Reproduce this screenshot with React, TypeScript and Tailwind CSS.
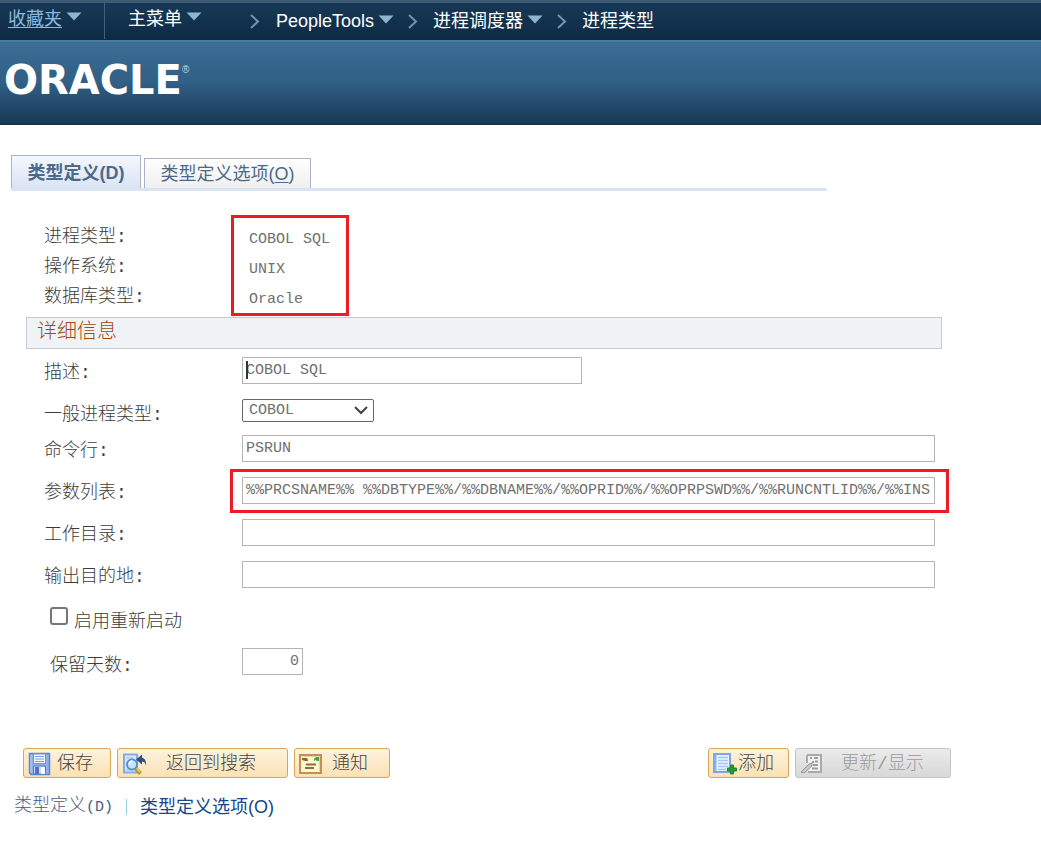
import type { ReactNode } from 'react';

const SANS = "font-['Liberation_Sans','Noto_Sans_CJK_SC',sans-serif]";
const MONO = "font-['Liberation_Mono','Noto_Sans_CJK_SC',monospace]";
const FIELD = `block h-[27px] border border-[#b5b5b5] bg-white px-[3px] text-[15px] text-[#707070] outline-none ${MONO}`;

function Arrow() {
  return (
    <svg width="16" height="9" viewBox="0 0 16 9" aria-hidden="true" className="shrink-0">
      <path d="M0.5 0.5h15L8 8.5z" fill="#8fb4d2" />
    </svg>
  );
}

function Chevron() {
  return (
    <svg width="10" height="15" viewBox="0 0 10 15" aria-hidden="true" className="shrink-0" fill="none">
      <path d="M1 1l7 6.5L1 14" stroke="#7393ae" strokeWidth="2" />
    </svg>
  );
}

function SaveIcon() {
  return (
    <svg width="23" height="24" viewBox="0 0 23 24" aria-hidden="true">
      <path d="M1.5 1.5h20v21H3l-1.500-1.500z" fill="#8db0ee" stroke="#5f86d2" strokeWidth="1.500" />
      <path d="M3 3v17" stroke="#b6cdf7" />
      <rect x="5.500" y="2" width="12" height="9.500" fill="#f3f7ff" stroke="#6f94da" />
      <path d="M7 4.500h9M7 7h9M7 9.500h9" stroke="#79a0e4" />
      <path d="M5.500 22v-8h12v8z" fill="#cfdcf8" stroke="#5577c0" />
      <rect x="7" y="15" width="4" height="7" fill="#5074bf" />
      <rect x="13" y="15" width="4" height="7" fill="#fff" />
    </svg>
  );
}

function ReturnIcon() {
  return (
    <svg width="26" height="24" viewBox="0 0 26 24" aria-hidden="true" fill="none">
      <path d="M2 2.500h13v18H2z" fill="#dce9fd" stroke="#83abe8" strokeWidth="2" />
      <path d="M4 6h8M4 18h8" stroke="#98bcec" />
      <path d="M13.500 16.500l5 5" stroke="#b79c28" strokeWidth="4" />
      <path d="M14.500 16l3.500 4" stroke="#e4d463" strokeWidth="1.500" />
      <circle cx="10" cy="12.500" r="5" fill="#c5e6fa" stroke="#5d8fc7" strokeWidth="2" />
      <path d="M7.500 12c0-2 1-3 3-3" stroke="#fff" strokeWidth="1.500" />
      <path d="M14 7.500l6-5v3c3 1 4.500 4 4 8-1-3-2-4-4-4v3z" fill="#304f87" />
    </svg>
  );
}

function NotifyIcon() {
  return (
    <svg width="23" height="20" viewBox="0 0 23 20" aria-hidden="true">
      <rect x="1" y="1" width="21" height="18" fill="#fff8cf" stroke="#c48e58" strokeWidth="2" />
      <path d="M2.500 2.500h18v15" fill="none" stroke="#ecd3a0" />
      <path d="M3 4h5l1 2v1H6L3 6z" fill="#93642d" />
      <path d="M15 7V5l2-2h3v4h-2l-1-1z" fill="#48a241" />
      <path d="M7 10.500h10M6 14h9" stroke="#9a693b" strokeWidth="2" />
    </svg>
  );
}

function AddIcon() {
  return (
    <svg width="24" height="22" viewBox="0 0 24 22" aria-hidden="true">
      <rect x="1" y="1" width="16" height="18" fill="#eaf3ff" stroke="#7ba4ec" strokeWidth="2" />
      <path d="M2.500 2v16" stroke="#89b2ef" strokeWidth="2" />
      <path d="M5 4.500h10M5 7.500h10M5 10.500h10M5 13.500h10M5 16.500h8" stroke="#a6c6f3" strokeWidth="1.500" />
      <path d="M17.500 12h3v3h3v3h-3v3h-3v-3h-3v-3h3z" fill="#2c9a36" stroke="#1b832b" />
    </svg>
  );
}

function UpdateIcon() {
  return (
    <svg width="23" height="21" viewBox="0 0 23 21" aria-hidden="true" fill="none">
      <path d="M7 2h14v17H8" fill="#f2f2f2" stroke="#aaa" strokeWidth="2" />
      <path d="M10 5h2M14 5h4M12 9h2M15 8.500h3M13 12h5M12 15.500h6" stroke="#9c9c9c" strokeWidth="2" />
      <path d="M1 19l8-8 3-1v3l-8 7z" fill="#c7c7c7" stroke="#979797" />
      <path d="M7 2v8" stroke="#aaa" strokeWidth="2" />
    </svg>
  );
}

function ActionButton({ icon, size, disabled, children }: { icon: ReactNode; size: string; disabled?: boolean; children: ReactNode }) {
  const tone = disabled
    ? 'border-[#c4c4c4] bg-linear-to-b from-[#ebebeb] to-[#d8d8d8] text-[#9b9b9b]'
    : 'border-[#d9a655] bg-linear-to-b from-[#fdf2dd] to-[#fae2b5] text-[#444]';
  return (
    <button type="button" disabled={disabled} className={`flex h-[30px] items-center rounded-[3px] border pl-1 pt-px text-[18px] font-light ${tone} ${size} ${MONO}`}>
      <span className="shrink-0">{icon}</span>
      <span className="whitespace-nowrap leading-6">{children}</span>
    </button>
  );
}

function Row({ id, label, children, height = 'h-[42px]' }: { id: string; label: string; children: ReactNode; height?: string }) {
  return (
    <div className={`flex items-start pl-[18px] ${height}`}>
      <label htmlFor={id} className={`w-[198px] shrink-0 leading-8 ${MONO}`}>{label}</label>
      {children}
    </div>
  );
}

const facts = [
  ['进程类型:', 'COBOL SQL'],
  ['操作系统:', 'UNIX'],
  ['数据库类型:', 'Oracle'],
];

export default function App() {
  return (
    <div className={`min-h-screen bg-white text-[18px] text-[#3c3c3c] ${SANS}`}>
      <nav className="flex h-10 items-start border-t-[3px] border-[#3c5a72] bg-linear-to-b from-[#173957] to-[#0e2a43] text-white">
        <div className="flex h-9 items-start gap-1 border-r border-[#3f5f7b] pl-2 pr-[22px] pt-[2px]">
          <a href="#favorites" className="leading-7 text-[#8fb7dc] underline underline-offset-2">收藏夹</a>
          <span className="pt-[7px]"><Arrow /></span>
        </div>
        <div className="flex items-start gap-1 pl-[23px] pt-[2px]">
          <a href="#menu" className="leading-7">主菜单</a>
          <span className="pt-[7px]"><Arrow /></span>
        </div>
        <div className="flex h-9 items-center pl-12">
          <Chevron />
          <a href="#peopletools" className="pl-4 pr-1">PeopleTools</a>
          <span className="pb-1"><Arrow /></span>
          <span className="pl-[14px]"><Chevron /></span>
          <a href="#scheduler" className="pl-[15px] pr-1">进程调度器</a>
          <span className="pb-1"><Arrow /></span>
          <span className="pl-[14px]"><Chevron /></span>
          <a href="#types" className="pl-[15px]">进程类型</a>
        </div>
      </nav>
      <header className="flex h-[85px] items-start border-b-2 border-t-2 border-b-[#14334f] border-t-[#4a7ba3] bg-linear-to-b from-[#3c6d95] via-[#315f85] to-[#193a57] pl-1 pt-[14px] text-white">
        <span className="font-['DejaVu_Sans',sans-serif] text-[40px] font-bold leading-[48px]">ORACLE</span>
        <span className="pt-2 text-[10px] leading-3 text-[#c5d4e1]">®</span>
      </header>

      <main className="max-w-[951px] pt-[30px]">
        <div role="tablist" className="ml-[11px] mr-[124px] flex items-end gap-[3px] border-b-[3px] border-[#dae4f3]">
          <button type="button" role="tab" aria-selected="true" className="h-[33px] w-[130px] border border-b-0 border-[#a9b3c9] bg-linear-to-b from-[#f4f7fd] to-[#d9e4f4] pt-[2px] font-bold text-[#4d6989]">类型定义(D)</button>
          <button type="button" role="tab" aria-selected="false" className="h-[30px] w-[167px] border border-b-0 border-[#a9b3c9] bg-linear-to-b from-white to-[#efefef] pt-[2px] text-[#4d6989]">类型定义选项(<u className="underline-offset-2">O</u>)</button>
        </div>

        <form className="pl-[26px]">
          <div className="relative mt-[30px] h-24">
            <dl className="pl-[18px] font-light">
              {facts.map(([name, value]) => (
                <div key={name} className="flex h-[30px] items-start">
                  <dt className={`w-[205px] leading-8 ${MONO}`}>{name}</dt>
                  <dd className={`pt-1 text-[15px] leading-[30px] text-[#707070] ${MONO}`}>{value}</dd>
                </div>
              ))}
            </dl>
            <div className="pointer-events-none absolute -top-1.5 left-[205px] h-[101px] w-[118px] border-[3px] border-[#ed1c24]" />
          </div>

          <h2 className="mr-[9px] h-8 border border-[#c5cad2] bg-[#f0f3f5] pl-[10px] text-[20px] font-light leading-[26px] text-[#a04a18]">详细信息</h2>

          <div className="pt-2 font-light">
            <Row id="description" label="描述:">
              <div className="relative w-[340px]">
                <input id="description" defaultValue="COBOL SQL" className={`w-full ${FIELD}`} />
                <span className="absolute left-1 top-1 h-[18px] w-[2px] bg-[#333]" />
              </div>
            </Row>
            <Row id="generic" label="一般进程类型:" height="h-9">
              <div className="relative w-[132px]">
                <select id="generic" defaultValue="COBOL" className={`block h-[23px] w-full appearance-none rounded-[2px] border border-[#666] bg-white pl-1.5 text-[15px] leading-5 text-[#707070] ${MONO}`}>
                  <option>COBOL</option>
                </select>
                <svg width="14" height="9" viewBox="0 0 14 9" fill="none" aria-hidden="true" className="pointer-events-none absolute right-1.5 top-[7px]">
                  <path d="M1 1l6 6 6-6" stroke="#444" strokeWidth="2" />
                </svg>
              </div>
            </Row>
            <Row id="command" label="命令行:">
              <input id="command" defaultValue="PSRUN" className={`mr-4 min-w-0 flex-1 ${FIELD}`} />
            </Row>
            <Row id="parameters" label="参数列表:">
              <div className="relative mr-4 min-w-0 flex-1">
                <input id="parameters" defaultValue="%%PRCSNAME%% %%DBTYPE%%/%%DBNAME%%/%%OPRID%%/%%OPRPSWD%%/%%RUNCNTLID%%/%%INS" className={`w-full ${FIELD}`} />
                <div className="pointer-events-none absolute -bottom-[9px] -left-3 -right-3.5 -top-2 border-[3px] border-[#ed1c24]" />
              </div>
            </Row>
            <Row id="directory" label="工作目录:">
              <input id="directory" className={`mr-4 min-w-0 flex-1 ${FIELD}`} />
            </Row>
            <Row id="destination" label="输出目的地:">
              <input id="destination" className={`mr-4 min-w-0 flex-1 ${FIELD}`} />
            </Row>
            <div className="flex h-[45px] items-start gap-[6px] pl-6 pt-1">
              <input id="restart" type="checkbox" className="h-[18px] w-[18px] appearance-none rounded-[3px] border-2 border-[#777] bg-white checked:bg-[#777]" />
              <label htmlFor="restart" className="leading-7">启用重新启动</label>
            </div>
            <div className="flex items-start pl-6">
              <label htmlFor="days" className={`w-48 leading-9 ${MONO}`}>保留天数:</label>
              <input id="days" defaultValue="0" className={`w-[61px] text-right ${FIELD}`} />
            </div>
          </div>
        </form>

        <div className="mt-16 flex justify-between pl-[23px]">
          <div className="flex gap-[6px]">
            <ActionButton icon={<SaveIcon />} size="w-[88px] gap-[6px]">保存</ActionButton>
            <ActionButton icon={<ReturnIcon />} size="w-[171px] gap-[18px]">返回到搜索</ActionButton>
            <ActionButton icon={<NotifyIcon />} size="w-24 gap-[10px]">通知</ActionButton>
          </div>
          <div className="flex gap-[6px]">
            <ActionButton icon={<AddIcon />} size="w-[81px] gap-px">添加</ActionButton>
            <ActionButton icon={<UpdateIcon />} size="w-[156px] gap-[18px]" disabled>更新/显示</ActionButton>
          </div>
        </div>

        <div className="flex items-center pl-[14px] pt-[14px] leading-[26px]">
          <span className="font-light text-[#4a5b85]">类型定义<span className={`text-[15px] ${MONO}`}>(D)</span></span>
          <span className="ml-[13px] mr-[13px] h-4 w-px bg-[#9dcfe6]" />
          <a href="#options" className="text-[#15478a]">类型定义选项(O)</a>
        </div>
      </main>
    </div>
  );
}
